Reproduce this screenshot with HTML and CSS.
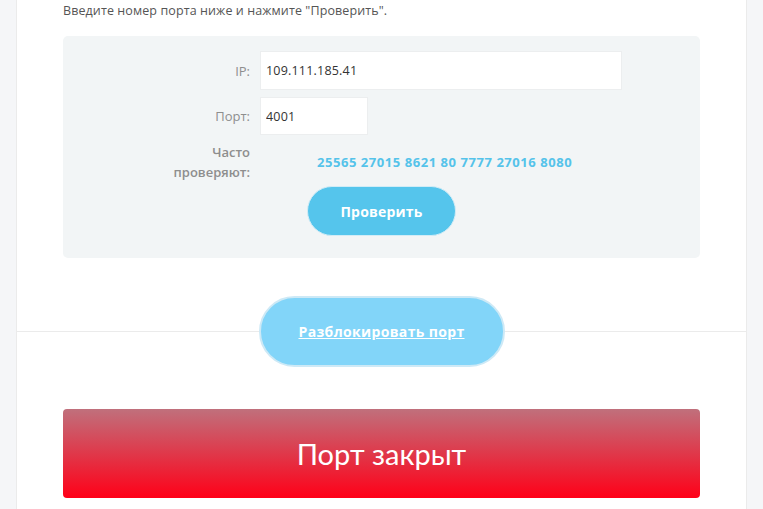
FILE: index.html
```html
<!DOCTYPE html>
<html>
<head>
    <title>Проверка порта</title>
    <link rel="stylesheet" href="styles.css">
</head>
<body>
    <div class="card">
        <p class="intro">Введите номер порта ниже и нажмите "Проверить".</p>
        <!-- форма проверки -->
        <div class="panel">
            <div class="row">
                <label for="ip" class="lbl">IP:</label>
                <input type="text" id="ip" class="fld fld-ip" value="109.111.185.41">
            </div>
            <div class="row">
                <label for="port" class="lbl">Порт:</label>
                <input type="text" id="port" class="fld fld-port" value="4001">
            </div>
            <div class="row row-last">
                <span class="lbl lbl-two">Часто<br>проверяют:</span>
                <div class="ports">
                    <a href="#">25565</a> <a href="#">27015</a> <a href="#">8621</a> <a href="#">80</a> <a href="#">7777</a> <a href="#">27016</a> <a href="#">8080</a>
                </div>
            </div>
            <div class="btn-row">
                <button class="check">Проверить</button>
            </div>
        </div>
        <div class="divider">
            <a href="#" class="unblock">Разблокировать порт</a>
        </div>
        <div class="result">Порт закрыт</div>
    </div>
</body>
</html>
```

FILE: styles.css
```css
body {
    margin: 0;
    background-color: #f5f6f8;
    font-family: "Open Sans", Arial, sans-serif;
}
.card {
    margin: 0 16px;
    background: #fff;
    border-left: 1px solid #ebebeb;
    border-right: 1px solid #ebebeb;
    padding: 2px 46px 20px;
    height: 500px;
}
.intro {
    margin: 0;
    font-size: 12.5px;
    line-height: 18px;
    color: #555;
    letter-spacing: 0.1px;
}
.panel {
    margin-top: 16px;
    background: #f2f5f6;
    border-radius: 5px;
    padding: 15px 0 22px;
}
.row {
    display: flex;
    align-items: center;
    margin-bottom: 7px;
}
.row-last {
    margin-bottom: 4px;
}
.lbl {
    width: 187px;
    padding-right: 10px;
    text-align: right;
    font-size: 13px;
    color: #8e8e8e;
}
.lbl-two {
    line-height: 20px;
    font-weight: 600;
}
.fld {
    height: 39px;
    box-sizing: border-box;
    border: 1px solid #eceeef;
    background: #fff;
    padding: 0 5px;
    font-family: "Open Sans", Arial, sans-serif;
    font-size: 12.5px;
    font-weight: 400;
    color: #333;
    letter-spacing: 0.2px;
}
.fld-ip {
    width: 362px;
}
.fld-port {
    width: 108px;
    height: 38px;
}
.ports {
    padding-left: 57px;
    font-size: 13px;
    font-weight: 700;
    letter-spacing: 0.55px;
}
.ports a {
    color: #55c3ea;
    text-decoration: none;
}
.btn-row {
    display: flex;
    justify-content: center;
}
.check {
    width: 149px;
    height: 50px;
    border-radius: 25px;
    border: 1px solid #d2ecf6;
    background: #55c5ec;
    color: #fff;
    font-family: "Open Sans", Arial, sans-serif;
    font-size: 14px;
    font-weight: 700;
    letter-spacing: 0.2px;
    cursor: pointer;
}
.divider {
    margin: 38px -46px 0;
    display: flex;
    justify-content: center;
    background: linear-gradient(#ebebeb, #ebebeb) center / 100% 1px no-repeat;
}
.unblock {
    width: 246px;
    height: 71px;
    box-sizing: border-box;
    border-radius: 36px;
    border: 2px solid #cde9f6;
    background: #82d5f9;
    color: #fff;
    font-size: 14px;
    font-weight: 700;
    letter-spacing: 0.35px;
    text-decoration: underline;
    display: flex;
    align-items: center;
    justify-content: center;
}
.result {
    margin-top: 42px;
    height: 89px;
    border-radius: 4px;
    background: linear-gradient(#c0707c, #ff0018);
    color: #fff;
    font-family: Lato, "Open Sans", sans-serif;
    font-size: 29px;
    display: flex;
    align-items: center;
    justify-content: center;
}
```
